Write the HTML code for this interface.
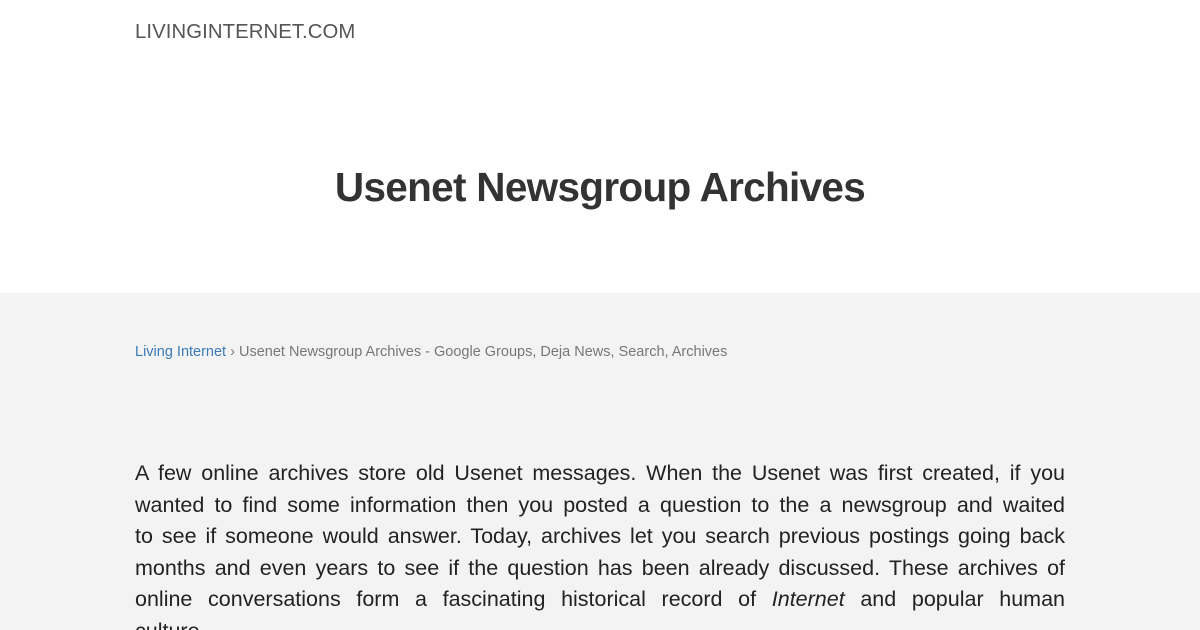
<!DOCTYPE html>
<html style="overflow:hidden;height:630px"><head><style>
body{margin:0;width:1200px;height:630px;overflow:hidden;font-family:"Liberation Sans",sans-serif;background:#fff;position:relative}
.top{height:293px;position:relative}
.logo{position:absolute;left:135px;top:21px;font-size:20.3px;color:#555;letter-spacing:0.1px}
h1{position:absolute;left:0;right:0;top:164px;margin:0;text-align:center;font-size:40.5px;font-weight:bold;color:#333;letter-spacing:-0.7px}
.grey{background:#f3f3f3;height:337px;position:relative;overflow:hidden}
.bc{position:absolute;left:135px;top:51px;font-size:14.5px;color:#777}
.bc a{color:#3a7bb5;text-decoration:none}
.txt{position:absolute;left:135px;width:930px;top:165px;font-size:21.5px;color:#222;line-height:31.6px}
.txt div{text-align:justify;text-align-last:justify;white-space:nowrap}
</style></head><body>
<div class="top"><div class="logo">LIVINGINTERNET.COM</div><h1>Usenet Newsgroup Archives</h1></div>
<div class="grey">
<div class="bc"><a>Living Internet</a> › Usenet Newsgroup Archives - Google Groups, Deja News, Search, Archives</div>
<div class="txt">
<div>A few online archives store old Usenet messages. When the Usenet was first created, if you</div>
<div>wanted to find some information then you posted a question to the a newsgroup and waited</div>
<div>to see if someone would answer. Today, archives let you search previous postings going back</div>
<div>months and even years to see if the question has been already discussed. These archives of</div>
<div>online conversations form a fascinating historical record of <i>Internet</i> and popular human</div>
<div style="text-align-last:left">culture.</div>
</div></div>
</body></html>
